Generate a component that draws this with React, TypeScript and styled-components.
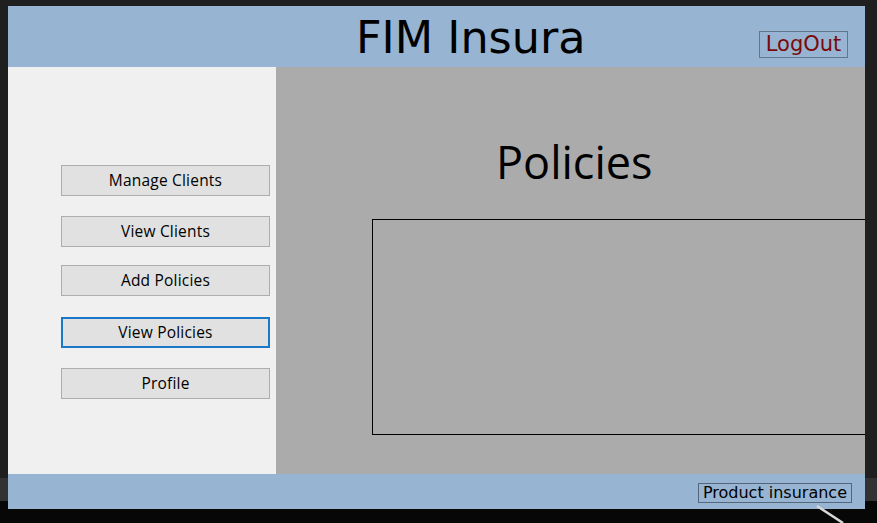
import React from "react";
import styled, { createGlobalStyle } from "styled-components";

const Global = createGlobalStyle`
  html, body {
    margin: 0;
    padding: 0;
    width: 877px;
    height: 523px;
    overflow: hidden;
  }
  body {
    background: linear-gradient(
      to bottom,
      #1f1f1f 0px,
      #1f1f1f 478px,
      #323232 478px,
      #323232 501px,
      #070707 501px
    );
    font-family: "Open Sans", "Liberation Sans", sans-serif;
  }
`;

const Desktop = styled.div`
  position: relative;
  width: 877px;
  height: 523px;
  padding: 6px 0 0 8px;
  box-sizing: border-box;
  overflow: hidden;
`;

const WallpaperStroke = styled.svg`
  position: absolute;
  left: 805px;
  top: 503px;
  width: 50px;
  height: 20px;
`;

const Window = styled.div`
  position: relative;
  width: 857px;
  height: 503px;
  display: flex;
  flex-direction: column;
  overflow: hidden;
`;

const Header = styled.header`
  height: 61px;
  flex: none;
  background: #97b4d2;
  display: flex;
  align-items: center;
`;

const AppTitle = styled.h1`
  margin: 0 0 0 348px;
  font-family: "DejaVu Sans", sans-serif;
  font-weight: normal;
  font-size: 44.5px;
  line-height: 1;
  color: #000;
  position: relative;
  top: 2px;
`;

const LogOutButton = styled.button`
  margin-left: auto;
  margin-right: 17px;
  margin-top: 15px;
  width: 89px;
  height: 27px;
  padding: 0;
  box-sizing: border-box;
  background: transparent;
  border: 1px solid #64768a;
  color: #7a0a0a;
  font-family: "DejaVu Sans", sans-serif;
  font-size: 21px;
  line-height: 25px;
`;

const Body = styled.div`
  flex: 1;
  display: flex;
  min-height: 0;
`;

const Sidebar = styled.nav`
  width: 268px;
  flex: none;
  background: #f0f0f0;
  box-sizing: border-box;
  padding: 98px 0 0 53px;
  display: flex;
  flex-direction: column;
`;

const NavButton = styled.button<{ $gap: number; $focused?: boolean }>`
  width: 209px;
  height: 31px;
  margin-top: ${(p) => p.$gap}px;
  box-sizing: border-box;
  padding: 0;
  background: #e1e1e1;
  border: ${(p) => (p.$focused ? "2px solid #1a78c9" : "1px solid #adadad")};
  color: #000;
  font-family: "Open Sans", "Liberation Sans", sans-serif;
  font-size: 15.5px;
  letter-spacing: 0.2px;
  line-height: 1;
`;

const Main = styled.main`
  flex: 1;
  background: #ababab;
  display: flex;
  flex-direction: column;
  min-width: 0;
`;

const PageTitle = styled.h2`
  margin: 65px 0 0 220px;
  font-family: "Open Sans", "Noto Sans", sans-serif;
  font-weight: normal;
  font-size: 45px;
  line-height: 60px;
  color: #000;
`;

const DataBox = styled.div`
  margin: 27px 0 0 96px;
  width: 520px;
  height: 216px;
  box-sizing: border-box;
  border: 1px solid #000;
  flex: none;
`;

const Footer = styled.footer`
  height: 35px;
  flex: none;
  background: #97b4d2;
  display: flex;
  align-items: center;
  justify-content: flex-end;
`;

const FooterLabel = styled.span`
  margin-right: 13px;
  margin-top: 2px;
  height: 20px;
  box-sizing: border-box;
  padding: 0 4px;
  border: 1px solid #56667a;
  font-family: "DejaVu Sans", sans-serif;
  font-size: 16px;
  line-height: 18px;
  color: #000;
`;

const navItems = [
  { label: "Manage Clients", gap: 0 },
  { label: "View Clients", gap: 20 },
  { label: "Add Policies", gap: 18 },
  { label: "View Policies", gap: 21, focused: true },
  { label: "Profile", gap: 20 },
];

export default function App() {
  return (
    <>
      <Global />
      <Desktop>
        <Window>
          <Header>
            <AppTitle>FIM Insura</AppTitle>
            <LogOutButton>LogOut</LogOutButton>
          </Header>
          <Body>
            <Sidebar>
              {navItems.map((n) => (
                <NavButton key={n.label} $gap={n.gap} $focused={n.focused}>
                  {n.label}
                </NavButton>
              ))}
            </Sidebar>
            <Main>
              <PageTitle>Policies</PageTitle>
              <DataBox />
            </Main>
          </Body>
          <Footer>
            <FooterLabel>Product insurance</FooterLabel>
          </Footer>
        </Window>
        <WallpaperStroke viewBox="0 0 50 20">
          <line x1="12" y1="3" x2="38" y2="20" stroke="#d8d8d8" strokeWidth="2.5" />
        </WallpaperStroke>
      </Desktop>
    </>
  );
}
